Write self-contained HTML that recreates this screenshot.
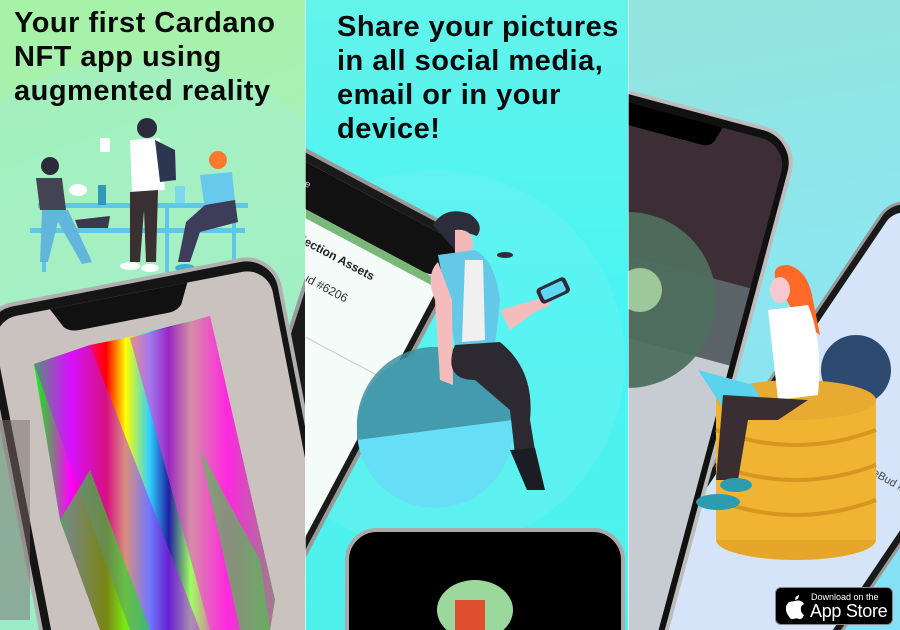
<!DOCTYPE html>
<html><head><meta charset="utf-8"><style>
*{margin:0;padding:0;box-sizing:border-box}
html,body{width:900px;height:630px;overflow:hidden}
body{position:relative;background:#fff;font-family:"Liberation Sans",sans-serif}
.p{position:absolute;top:0;height:630px;overflow:hidden}
.t{position:absolute;font-weight:bold;color:#0a0a0a;font-size:29px;line-height:34px;letter-spacing:0.5px;z-index:5}
.abs{position:absolute}
</style></head><body>

<!-- Panel 1 -->
<div class="p" style="left:0;width:305px;background:linear-gradient(160deg,#a6f2a6 0%,#a8f0b8 40%,#98eccc 100%)">
  <div class="abs" style="left:-120px;top:60px;width:520px;height:520px;border-radius:50%;background:rgba(160,240,210,0.45)"></div>
  <div class="t" style="left:14px;top:6px">Your first Cardano<br>NFT app using<br>augmented reality</div>
  <svg class="abs" style="left:0;top:0" width="305" height="630">
    <rect x="38" y="203" width="210" height="5" fill="#5fc8e8"/>
    <rect x="30" y="228" width="215" height="5" fill="#5fc8e8"/>
    <rect x="42" y="206" width="4" height="66" fill="#5fc8e8"/>
    <rect x="165" y="206" width="4" height="66" fill="#5fc8e8"/>
    <rect x="232" y="206" width="4" height="66" fill="#5fc8e8"/>
    <circle cx="50" cy="166" r="9" fill="#2b2b3c"/>
    <path d="M36 178 L62 178 L66 210 L40 210 Z" fill="#444454"/>
    <path d="M42 210 L68 210 L92 262 L82 264 L58 222 L48 262 L40 262 Z" fill="#62b6dc"/>
    <ellipse cx="78" cy="190" rx="9" ry="6" fill="#fff"/>
    <path d="M75 220 L110 216 L108 228 L78 228Z" fill="#3a3a4c"/>
    <circle cx="147" cy="128" r="10" fill="#2b2b3c"/>
    <path d="M130 140 L160 138 L165 190 L132 192 Z" fill="#fff"/>
    <path d="M155 140 L175 150 L176 180 L160 182Z" fill="#2d3650"/>
    <path d="M130 192 L158 190 L156 262 L146 262 L144 210 L140 262 L130 262 Z" fill="#3a3032"/>
    <ellipse cx="130" cy="266" rx="10" ry="4" fill="#fff"/>
    <ellipse cx="150" cy="268" rx="9" ry="4" fill="#fff"/>
    <rect x="100" y="138" width="10" height="14" fill="#fff"/>
    <rect x="98" y="185" width="8" height="20" fill="#2f9ab8"/>
    <circle cx="218" cy="160" r="9" fill="#ff7a30"/>
    <path d="M200 175 L232 172 L236 210 L205 210Z" fill="#68c9ec"/>
    <path d="M205 205 L235 200 L238 222 L200 232 L190 262 L178 262 L186 222Z" fill="#3d3d5a"/>
    <ellipse cx="185" cy="268" rx="10" ry="4" fill="#3bb0d0"/>
    <rect x="175" y="186" width="10" height="17" fill="#7fd8f0"/>
    <g transform="rotate(18 280 400)">
      <rect x="268" y="120" width="120" height="520" rx="28" fill="#1a1a1a" stroke="#9a9a9a" stroke-width="4"/>
    </g>
    <g transform="rotate(-11 150 300)">
      <rect x="-20" y="278" width="300" height="460" rx="34" fill="#151515" stroke="#b0b0b0" stroke-width="4"/>
      <rect x="-10" y="290" width="282" height="440" rx="26" fill="#c9c2be"/>
      <path d="M50 290 L190 290 L180 310 Q175 316 165 316 L75 316 Q65 316 60 310 Z" fill="#111"/>
    </g>
    <defs>
      <linearGradient id="rb" x1="0" x2="1" y1="0" y2="0">
        <stop offset="0" stop-color="#00ff00"/><stop offset="0.15" stop-color="#ff00ff"/>
        <stop offset="0.3" stop-color="#ff0000"/><stop offset="0.38" stop-color="#ffff00"/>
        <stop offset="0.48" stop-color="#30d0ff"/><stop offset="0.56" stop-color="#2020a0"/>
        <stop offset="0.65" stop-color="#a0ff60"/><stop offset="0.8" stop-color="#ff20e0"/>
        <stop offset="1" stop-color="#20e020"/>
      </linearGradient>
    </defs>
    <path d="M34 364 L90 345 L125 338 L210 316 L275 600 L270 630 L100 630 L60 520 Z" fill="url(#rb)"/>
    <path d="M34 364 L130 630 L200 630 L90 345Z" fill="#b020ff" opacity="0.5"/>
    <path d="M60 520 L100 630 L150 630 L90 470Z" fill="#20e020" opacity="0.6"/>
    <path d="M130 338 L210 316 L275 600 L270 630 L210 630Z" fill="#ff30e0" opacity="0.55"/>
    <path d="M200 450 L260 560 L270 630 L240 630Z" fill="#40d040" opacity="0.6"/>
    <rect x="0" y="420" width="30" height="200" fill="#7a6c6a" opacity="0.5"/>
  </svg>
</div>

<!-- Panel 2 -->
<div class="p" style="left:305px;width:323px;background:linear-gradient(180deg,#63f3ea 0%,#48f4f4 50%,#50f0ea 100%)">
  <div class="abs" style="left:-60px;top:170px;width:380px;height:380px;border-radius:50%;background:rgba(120,240,240,0.35)"></div>
  <div class="t" style="left:32px;top:10px">Share your pictures<br>in all social media,<br>email or in your<br>device!</div>
  <svg class="abs" style="left:0;top:0" width="323" height="630">
    <g transform="rotate(28 0 150)">
      <rect x="-60" y="150" width="250" height="470" rx="30" fill="#1a1a1a" stroke="#999" stroke-width="4"/>
      <rect x="-50" y="160" width="232" height="452" rx="22" fill="#f4fbf8"/>
      <rect x="-50" y="160" width="232" height="42" rx="20" fill="#111"/>
      <rect x="-50" y="202" width="232" height="8" fill="#7ab87a"/>
      <text x="-20" y="182" font-size="10" fill="#ddd" font-family="Liberation Sans">vodafone</text>
      <text x="20" y="234" font-size="12" font-weight="bold" fill="#222" font-family="Liberation Sans">Collection Assets</text>
      <text x="15" y="266" font-size="12" fill="#333" font-family="Liberation Sans">SpaceBud #6206</text>
      <line x1="-50" y1="315" x2="182" y2="315" stroke="#ccc"/>
      <text x="-5" y="338" font-size="12" fill="#333" font-family="Liberation Sans">#3825</text>
    </g>
    <circle cx="130" cy="430" r="78" fill="#66dff6"/>
    <path d="M52 430 A78 78 0 0 1 208 420 L52 440Z" fill="#3e8fa0" opacity="0.85"/>
    <path d="M128 225 Q140 205 165 214 Q180 225 172 236 L160 232 L150 250 Z" fill="#2c2c3a"/>
    <ellipse cx="200" cy="255" rx="8" ry="3" fill="#2c2c3a"/>
    <path d="M150 230 Q168 228 168 245 L165 258 L150 260 Z" fill="#f2b8b8"/>
    <path d="M133 255 L170 250 Q190 260 195 300 L190 345 L150 345 Z" fill="#64c9e8"/>
    <path d="M160 260 L178 260 L180 340 L157 342Z" fill="#f0f0f0"/>
    <path d="M133 262 Q120 275 130 300 L135 380 L148 385 L147 300Z" fill="#f4bcbc"/>
    <path d="M150 345 L195 342 Q230 370 225 420 L230 450 L210 455 L205 410 L170 380 Q140 380 148 350Z" fill="#2c2a30"/>
    <path d="M205 450 L230 448 L240 490 L222 490Z" fill="#1c1c24"/>
    <path d="M195 310 L230 300 L245 295 L245 305 L230 312 L205 330Z" fill="#f4bcbc"/>
    <rect x="232" y="282" width="32" height="17" rx="4" transform="rotate(-25 248 290)" fill="#2c2c3a"/>
    <rect x="236" y="285" width="24" height="11" rx="2" transform="rotate(-25 248 290)" fill="#5fd8f5"/>
    <rect x="42" y="530" width="276" height="140" rx="30" fill="#000" stroke="#aaa" stroke-width="4"/>
    <ellipse cx="170" cy="610" rx="38" ry="30" fill="#9cd89c"/>
    <rect x="150" y="600" width="30" height="30" fill="#e05030"/>
  </svg>
</div>

<!-- Panel 3 -->
<div class="p" style="left:628px;width:272px;background:linear-gradient(170deg,#92e4dc 0%,#8ee6ee 40%,#84e0f6 100%)">
  <svg class="abs" style="left:0;top:0" width="272" height="630">
    <g transform="rotate(34 272 205)">
      <rect x="262" y="195" width="200" height="560" rx="30" fill="#1a1a1a" stroke="#999" stroke-width="3"/>
      <rect x="270" y="205" width="184" height="540" rx="22" fill="#d6e4fa"/>
    </g>
    <g transform="rotate(15 0 95)">
      <rect x="-120" y="92" width="296" height="620" rx="36" fill="#111" stroke="#bdbdbd" stroke-width="4"/>
      <rect x="-110" y="102" width="278" height="600" rx="28" fill="#3c2e34"/>
      <rect x="-110" y="250" width="278" height="120" fill="#5a6468"/>
      <rect x="-110" y="330" width="278" height="380" fill="#c6ccd2"/>
      <path d="M-30 102 L100 102 L95 118 Q92 124 84 124 L-24 124 Q-32 124 -34 118Z" fill="#000"/>
    </g>
    <circle cx="0" cy="300" r="88" fill="#4e6e5e" opacity="0.95"/>
    <circle cx="12" cy="290" r="22" fill="#9cc89c"/>
    <circle cx="228" cy="370" r="35" fill="#2e4a70"/>
    <text x="222" y="462" font-size="11" fill="#444" transform="rotate(30 222 462)" font-family="Liberation Sans">SpaceBud #</text>
    <g>
      <ellipse cx="168" cy="540" rx="80" ry="20" fill="#e6a62a"/>
      <rect x="88" y="400" width="160" height="140" fill="#f0b432"/>
      <ellipse cx="168" cy="400" rx="80" ry="20" fill="#e8aa30"/>
      <path d="M88 430 Q168 460 248 430" stroke="#d89620" stroke-width="4" fill="none"/>
      <path d="M88 465 Q168 495 248 465" stroke="#d89620" stroke-width="4" fill="none"/>
      <path d="M88 500 Q168 530 248 500" stroke="#d89620" stroke-width="4" fill="none"/>
      <path d="M150 285 Q140 265 160 265 Q180 270 185 300 L192 335 L170 320Z" fill="#ff6a28"/>
      <ellipse cx="152" cy="290" rx="10" ry="13" fill="#f8c8d0"/>
      <path d="M140 310 L180 305 Q195 340 190 395 L150 400 Z" fill="#fff"/>
      <path d="M70 370 L125 385 L140 412 L95 408Z" fill="#5ad4ee"/>
      <path d="M95 395 L180 400 L150 420 L120 420 L110 480 L88 480Z" fill="#3a2e32"/>
      <ellipse cx="90" cy="502" rx="22" ry="8" fill="#2e9cb0"/>
      <ellipse cx="108" cy="485" rx="16" ry="7" fill="#2e9cb0"/>
    </g>
  </svg>
  <div class="abs" style="left:147px;top:587px;width:118px;height:38px;background:#000;border:1px solid #888;border-radius:6px;color:#fff">
    <svg class="abs" style="left:8px;top:6px" width="22" height="26" viewBox="0 0 22 26">
      <path d="M15 1 Q15 5 11 6 Q11 2 15 1Z M11 7 Q14 6 17 7 Q19 8 20 10 Q16 12 17 17 Q18 20 20 21 Q18 26 15 25 Q13 24 11 24.5 Q8 26 6 24 Q1 18 2 13 Q3 8 7 7.5 Q9 7.5 11 7Z" fill="#fff"/>
    </svg>
    <div class="abs" style="left:35px;top:4px;font-size:9px;white-space:nowrap">Download on the</div>
    <div class="abs" style="left:34px;top:13px;font-size:18px;white-space:nowrap;letter-spacing:-0.3px">App Store</div>
  </div>
</div>
<div class="abs" style="left:305px;top:0;width:1px;height:630px;background:#fff;opacity:0.6"></div>
<div class="abs" style="left:628px;top:0;width:1px;height:630px;background:#fff;opacity:0.6"></div>
</body></html>
